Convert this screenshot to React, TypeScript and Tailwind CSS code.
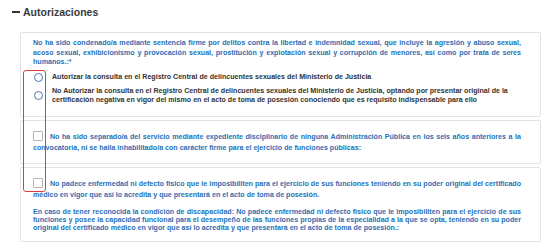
import React from "react";

const F = { fontFamily: '"Liberation Sans", Arial, sans-serif' };

function JLine({ children }: { children: React.ReactNode }) {
  return <div className="text-justify [text-align-last:justify] whitespace-nowrap">{children}</div>;
}

function Check() {
  return (
    <span className="inline-block align-middle w-[10px] h-[10px] border border-[#b5b5b5] rounded-[1px] bg-white mr-[7px] relative top-[-1px]" />
  );
}

function Radio() {
  return <span className="shrink-0 w-[9px] h-[9px] rounded-full border-[1.3px] border-[#4a78b8] bg-white" />;
}

export default function App() {
  return (
    <div className="relative w-[548px] h-[246px] overflow-hidden bg-white" style={F}>
      <div className="flex items-center gap-[3px] pl-[12px] pt-[5px] h-[19px]">
        <span className="w-[8px] h-[2.5px] bg-[#333]" />
        <span className="text-[10.5px] leading-[14px] font-bold text-[#3a3a3a]">Autorizaciones</span>
      </div>

      <div className="ml-[20px] mr-[7px] mt-[13px] flex flex-col gap-[3px]">
        <div className="border border-[#e3e3e3] rounded-[2px] pl-[12px] pr-[19px] pt-[6px] pb-[11px]">
          <div className="text-[7.1px] leading-[9.5px] font-bold text-[#2a6fb5]">
            <JLine>No ha sido condenado/a mediante sentencia firme por delitos contra la libertad e indemnidad sexual, que incluye la agresión y abuso sexual,</JLine>
            <JLine>acoso sexual, exhibicionismo y provocación sexual, prostitución y explotación sexual y corrupción de menores, así como por trata de seres</JLine>
            <div>humanos.:*</div>
          </div>
          <div className="mt-[5px] flex items-center gap-[9px] pl-[1px] text-[7.1px] leading-[9px] font-bold text-[#333]">
            <Radio />
            <span>Autorizar la consulta en el Registro Central de delincuentes sexuales del Ministerio de Justicia</span>
          </div>
          <div className="mt-[5px] flex items-center gap-[9px] pl-[1px] text-[7.1px] leading-[9px] font-bold text-[#333]">
            <Radio />
            <span className="whitespace-nowrap">
              No Autorizar la consulta en el Registro Central de delincuentes sexuales del Ministerio de Justicia, optando por presentar original de la
              <br />
              certificación negativa en vigor del mismo en el acto de toma de posesión conociendo que es requisito indispensable para ello
            </span>
          </div>
        </div>

        <div className="border border-[#e3e3e3] rounded-[2px] pl-[12px] pr-[19px] pt-[11px] pb-[9px] text-[7.1px] leading-[11px] font-bold text-[#2a6fb5]">
          <JLine>
            <Check />No ha sido separado/a del servicio mediante expediente disciplinario de ninguna Administración Pública en los seis años anteriores a la
          </JLine>
          <div>convocatoria, ni se halla inhabilitado/a con carácter firme para el ejercicio de funciones públicas:</div>
        </div>

        <div className="border border-[#e3e3e3] rounded-[2px] pl-[12px] pr-[19px] pt-[11px] pb-[9px] text-[7.1px] font-bold text-[#2a6fb5]">
          <div className="leading-[11px]">
            <JLine>
              <Check />No padece enfermedad ni defecto físico que le imposibiliten para el ejercicio de sus funciones teniendo en su poder original del certificado
            </JLine>
            <div>médico en vigor que así lo acredita y que presentará en el acto de toma de posesión.</div>
          </div>
          <div className="mt-[7px] leading-[8px]">
            <JLine>En caso de tener reconocida la condición de discapacidad: No padece enfermedad ni defecto físico que le imposibiliten para el ejercicio de sus</JLine>
            <JLine>funciones y posee la capacidad funcional para el desempeño de las funciones propias de la especialidad a la que se opta, teniendo en su poder</JLine>
            <div>original del certificado médico en vigor que así lo acredita y que presentará en el acto de toma de posesión.:</div>
          </div>
        </div>
      </div>

      <div className="absolute left-[23px] top-[70px] w-[23px] h-[122px] border-[1.5px] border-[#e23b3b] rounded-[3px]" />
    </div>
  );
}
